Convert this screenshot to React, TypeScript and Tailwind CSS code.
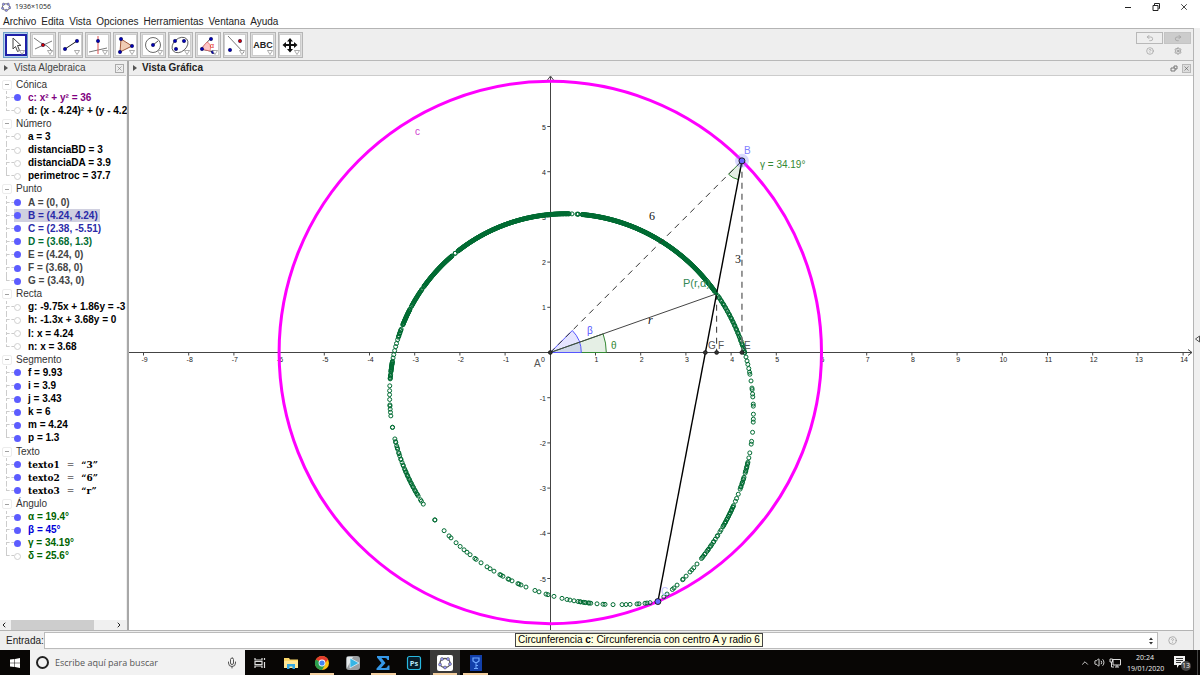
import type { ReactNode } from "react";
import { ChevronLeft, ChevronRight, ChevronUp, CircleHelp, Mic, Redo2, Settings, Undo2, Volume2, X } from "lucide-react";

type Row = {
    text: string;
    color?: string;
    group?: boolean;
    hidden?: boolean;
    selected?: boolean;
    last?: boolean;
    serif?: string;
};

const gray = "text-[#444444]";
const navy = "text-[#2a2aa8]";
const green = "text-[#006400]";

const rows: Row[] = [
    { text: "Cónica", group: true },
    { text: "c: x² + y² = 36", color: "text-[#800080]" },
    { text: "d: (x - 4.24)² + (y - 4.2", hidden: true, last: true },
    { text: "Número", group: true },
    { text: "a = 3", hidden: true },
    { text: "distanciaBD = 3", hidden: true },
    { text: "distanciaDA = 3.9", hidden: true },
    { text: "perimetroc = 37.7", hidden: true, last: true },
    { text: "Punto", group: true },
    { text: "A = (0, 0)", color: gray },
    { text: "B = (4.24, 4.24)", color: navy, selected: true },
    { text: "C = (2.38, -5.51)", color: navy },
    { text: "D = (3.68, 1.3)", color: "text-[#006b32]" },
    { text: "E = (4.24, 0)", color: gray },
    { text: "F = (3.68, 0)", color: gray },
    { text: "G = (3.43, 0)", color: gray, last: true },
    { text: "Recta", group: true },
    { text: "g: -9.75x + 1.86y = -3", hidden: true },
    { text: "h: -1.3x + 3.68y = 0", hidden: true },
    { text: "l: x = 4.24", hidden: true },
    { text: "n: x = 3.68", hidden: true, last: true },
    { text: "Segmento", group: true },
    { text: "f = 9.93" },
    { text: "i = 3.9" },
    { text: "j = 3.43" },
    { text: "k = 6" },
    { text: "m = 4.24" },
    { text: "p = 1.3", last: true },
    { text: "Texto", group: true },
    { text: "texto1", serif: "“3”" },
    { text: "texto2", serif: "“6”" },
    { text: "texto3", serif: "“r”", last: true },
    { text: "Ángulo", group: true },
    { text: "α = 19.4°", color: green },
    { text: "β = 45°", color: "text-[#0000d8]" },
    { text: "γ = 34.19°", color: green },
    { text: "δ = 25.6°", color: green, hidden: true, last: true },
];

const TreeRow = ({ row }: { row: Row }) => {
    if (row.group) {
        return (
            <li className="flex items-center gap-1 whitespace-nowrap pl-0.5 text-[#333333]">
                <span className="flex h-[10px] w-[10px] items-center justify-center rounded-[2px] border border-[#ececec]">
                    <span className="h-px w-1 bg-[#a0a0a0]" />
                </span>
                {row.text}
            </li>
        );
    }
    return (
        <li className="flex min-w-0 items-stretch whitespace-nowrap font-bold">
            <span className="flex w-[14px] shrink-0 pl-1.5">
                <span className={`${row.last ? "h-1/2" : "h-full"} border-l border-dashed border-[#cccccc]`} />
                <span className="h-1/2 w-full border-b border-dashed border-[#cccccc]" />
            </span>
            <span className={`${row.selected ? "bg-[#d0d0e0]" : ""} flex items-center pr-0.5`}>
                <span className={`${row.hidden ? "border border-[#d0d0d0] bg-white" : "bg-[#5c5cff]"} mr-[7px] h-[7px] w-[7px] shrink-0 rounded-full`} />
                {row.serif ? (
                    <span className="flex gap-[7px] font-['DejaVu_Serif',serif] text-[9px] text-black">
                        <span>{row.text}</span>
                        <span className="font-normal">=</span>
                        <span>{row.serif}</span>
                    </span>
                ) : (
                    <span className={row.color ?? "text-black"}>{row.text}</span>
                )}
            </span>
        </li>
    );
};

const Dot = ({ x, y, fill = "#0000b4" }: { x: number; y: number; fill?: string }) => (
    <circle cx={x} cy={y} r="1.7" fill={fill} stroke="#000040" strokeWidth="0.5" />
);

const tools: { name: string; icon: ReactNode }[] = [
    { name: "Elige y Mueve", icon: <path d="M7 3v11l2.500-2.500 2 5 2-1-2-5h3.500z" fill="#fff" stroke="#444" /> },
    { name: "Intersección", icon: <><path d="M1 3q6 5 13 8 4 3 5 6M2 14 19 6" fill="none" stroke="#555" strokeWidth="0.8" /><Dot x={10} y={10} fill="#d00000" /></> },
    { name: "Segmento", icon: <><path d="M4 14 16 6" stroke="#222" /><Dot x={4} y={14} /><Dot x={16} y={6} /></> },
    { name: "Perpendicular", icon: <><path d="M1 17 19 13" stroke="#555" strokeWidth="0.8" /><path d="M10 1v18" stroke="#e05050" /><Dot x={10} y={6} /></> },
    { name: "Polígono", icon: <><path d="M5 4 16 11 4 17z" fill="#f0cdb5" stroke="#a05a3c" /><Dot x={5} y={4} /><Dot x={16} y={11} /><Dot x={4} y={17} /></> },
    { name: "Circunferencia", icon: <><circle cx="10" cy="10" r="7.5" fill="none" stroke="#444" strokeWidth="0.8" /><path d="m10 10 5-4" stroke="#555" /><Dot x={10} y={10} /></> },
    { name: "Elipse", icon: <><ellipse cx="10" cy="10" rx="9" ry="6.5" transform="rotate(-42 10 10)" fill="none" stroke="#444" strokeWidth="0.8" /><Dot x={5} y={6} /><Dot x={14} y={6} /><Dot x={6} y={14} /></> },
    { name: "Ángulo", icon: <><path d="M13 3 3 14 16 17" fill="none" stroke="#555" /><path d="M9 7q5 2 3 9L3 14z" fill="#ffc5c5" stroke="#e05050" strokeWidth="0.6" /><text x="12" y="13" fontSize="7" fill="#e02020">α</text><Dot x={13} y={4} /><Dot x={4} y={14} /><Dot x={15} y={17} /></> },
    { name: "Simetría", icon: <><path d="m3 1 16 17" stroke="#555" strokeWidth="0.8" /><Dot x={15} y={6} fill="#d00000" /><Dot x={5} y={15} /></> },
    { name: "Texto", icon: <text x="10" y="13" fontSize="9" fontWeight="bold" textAnchor="middle" fill="#222">ABC</text> },
    { name: "Desplaza Vista Gráfica", icon: <path d="M10 3 13 6.500h-2V9h3V7l3.500 3L14 13v-2h-3v3h2l-3 3.500L7 14h2v-3H6v2l-3.500-3L6 7v2h3V6.500H7z" fill="#111" /> },
];

const GeoLogo = () => (
    <svg viewBox="0 0 16 16" className="h-full w-full" aria-hidden="true">
        <ellipse cx="8" cy="8" rx="6" ry="5.300" fill="none" stroke="#666" strokeWidth="1.400" />
        {[[4, 3.5], [11.5, 3.5], [14, 9], [8.5, 13.5], [2.5, 10]].map(([x, y]) => (
            <circle key={x} cx={x} cy={y} r="1.8" fill="#9999ff" stroke="#333" strokeWidth="0.6" />
        ))}
    </svg>
);

// Plane to screen
const UNIT = 45.2;
const OX = 550.3;
const OY = 352.5;
const px = (x: number) => OX + x * UNIT;
const py = (y: number) => OY - y * UNIT;

const C = { x: 2.38, y: -5.51 };

// Angle at C of a traced point, measured from the line CA. The trace is r = 12cos(phi) - 3
const phiOf = (sx: number, sy: number) => {
    const dx = (sx - OX) / UNIT - C.x;
    const dy = (OY - sy) / UNIT - C.y;
    const cross = -C.x * dy + C.y * dx;
    const dot = -C.x * dx - C.y * dy;
    const dist = Math.hypot(dx, dy);
    if (dist < 5) return Math.sign(cross) * Math.acos((dist + 3) / 12);
    return Math.atan2(cross, dot);
};

const tracePoint = (phi: number) => {
    const r = 12 * Math.cos(phi) - 3;
    const a = Math.atan2(-C.y, -C.x) + phi;
    return [px(C.x + r * Math.cos(a)), py(C.y + r * Math.sin(a))];
};

// x1, y1, x2, y2, number of points
const runs = [
    [582, 214, 715, 291, 300], [718, 296, 745, 353, 44], [458, 251, 569, 213, 220],
    [452, 256, 424, 287, 75], [422, 289, 411, 306, 24], [409, 308, 402, 324, 30],
    [400, 328, 397, 336, 9], [391, 360, 390, 371, 16], [390, 374, 390, 379, 6],
    [395, 439, 405, 469, 15], [405, 470, 418, 496, 20], [578, 602, 591, 603, 9],
    [703, 556, 714, 541, 11], [715, 539, 721, 530, 5], [723, 527, 733, 505, 20],
    [740, 489, 744, 477, 9], [745, 473, 748, 462, 9],
];

const singles = [
    [572, 214], [577, 214], [578, 214], [578, 214], [583, 214], [455, 253], [455, 253],
    [396, 338], [395, 342], [395, 346], [394, 350], [393, 354], [392, 357],
    [390, 386], [390, 391], [390, 395], [389, 399], [390, 405], [390, 406], [390, 409], [390, 412], [391, 416],
    [392, 427], [392, 427], [421, 500], [421, 501], [423, 504], [435, 520], [435, 520],
    [444, 531], [449, 536], [451, 538], [456, 543], [460, 547], [464, 550], [467, 552], [470, 555],
    [475, 558], [476, 560], [481, 563], [487, 567], [490, 569], [494, 571], [500, 574], [501, 575],
    [503, 576], [508, 579], [509, 579], [512, 581], [518, 583], [519, 584], [521, 585], [526, 587],
    [535, 590], [539, 592], [546, 594], [548, 595], [554, 596], [562, 598], [567, 599], [570, 600],
    [574, 601], [597, 603], [603, 604], [605, 604], [613, 604], [622, 604], [626, 604], [630, 604],
    [637, 604], [639, 604], [645, 603], [647, 603], [650, 602],
    [664, 597], [667, 594], [672, 589], [674, 588], [677, 585], [682, 579], [683, 579], [686, 576],
    [690, 572], [692, 570], [694, 568], [697, 564], [701, 558], [702, 557],
    [735, 501], [736, 498], [738, 494], [749, 458], [750, 453], [751, 444], [751, 441], [752, 432],
    [753, 422], [753, 419], [753, 414], [753, 406], [753, 404], [753, 397], [753, 393], [752, 390],
    [752, 388], [751, 381], [750, 374], [750, 371], [749, 368], [748, 364], [747, 361], [746, 357],
];

const trace = [
    ...singles.map(([x, y]) => tracePoint(phiOf(x, y))),
    ...runs.flatMap(([x1, y1, x2, y2, n]) => {
        const from = phiOf(x1, y1);
        const to = phiOf(x2, y2);
        return Array.from({ length: n }, (_, i) => {
            const t = Math.min(1, (i + 0.35 * Math.sin(i * 2.3)) / (n - 1));
            return tracePoint(from + (to - from) * t);
        });
    }),
];

const range = (from: number, to: number) => Array.from({ length: to - from + 1 }, (_, i) => from + i);

const GraphicsView = () => {
    const bx = px(4.24);
    const by = py(4.24);
    const dx = px(3.68);
    const dy = py(1.3);
    return (
        <svg className="h-full w-full" role="img" aria-label="Vista Gráfica" fontFamily="Liberation Sans, Arial, sans-serif">
            <g transform="translate(-129 -76)">
                {/* axes */}
                <g stroke="#444" strokeWidth="1" fill="none">
                    <path d={`M128 ${OY}H1192M1188 349.500l4 3-4 3M550.500 630V77M547.500 80l3-4 3 4`} />
                    {range(-9, 14).filter((n) => n !== 0).map((n) => <path key={n} d={`M${px(n)} ${OY}v3`} />)}
                    {range(-5, 5).filter((n) => n !== 0).map((n) => <path key={n} d={`M${OX} ${py(n)}h-3`} />)}
                </g>
                <g fontSize="7" fill="#222">
                    {range(-9, 14).filter((n) => n !== 0).map((n) => <text key={n} x={px(n) + 1} y="362" textAnchor="middle">{n}</text>)}
                    {range(-5, 5).filter((n) => n !== 0).map((n) => <text key={n} x="546" y={py(n) + 3} textAnchor="end">{n}</text>)}
                    <text x="541" y="362">0</text>
                </g>

                {/* angles */}
                <path d={`M${OX} ${OY}h56A56 56 0 0 0 ${OX + 52.8} ${OY - 18.6}z`} fill="#006400" fillOpacity="0.1" stroke="#338833" />
                <path d={`M${OX} ${OY}h31A31 31 0 0 0 ${OX + 22} ${OY - 22}z`} fill="#0000ff" fillOpacity="0.1" stroke="#5555ff" />
                <path d={`M${bx} ${by}l-13.400 13.400A19 19 0 0 0 ${bx - 3.6} ${by + 18.7}z`} fill="#006400" fillOpacity="0.1" stroke="#338833" />

                {/* circle and segments */}
                <circle cx={OX} cy={OY} r={6 * UNIT} fill="none" stroke="#ff00ff" strokeWidth="3" />
                <g stroke="#006b32" strokeWidth="1" fill="none">
                    {trace.map(([x, y], i) => <circle key={i} cx={x} cy={y} r="2" />)}
                </g>
                <path d={`M${OX} ${OY}L${bx} ${by}`} stroke="#333" strokeDasharray="6 5" />
                <path d={`M${bx} ${by}V${OY}`} stroke="#777" strokeWidth="1.500" strokeDasharray="6 5" />
                <path d={`M${dx} ${dy}V${OY}`} stroke="#333" strokeDasharray="6 5" />
                <path d={`M${OX} ${OY}L${dx} ${dy}`} stroke="#444" />
                <path d={`M${bx} ${by}L${px(C.x)} ${py(C.y)}`} stroke="#000" strokeWidth="1.400" />

                {/* points */}
                <circle cx={bx} cy={by} r="7" fill="#7d7dff" fillOpacity="0.3" />
                <g fill="#6666ff" stroke="#111" strokeWidth="0.900">
                    <circle cx={bx} cy={by} r="3" />
                    <circle cx={px(C.x)} cy={py(C.y)} r="3" />
                </g>
                <g fill="#333" stroke="#000" strokeWidth="0.500">
                    {[0, 3.43, 3.68, 4.24].map((x) => <circle key={x} cx={px(x)} cy={OY} r="2" />)}
                </g>
                <circle cx={dx} cy={dy} r="1.800" fill="#006b32" />

                <g fontSize="10" fill="#555">
                    <text x="534" y="367">A</text>
                    <text x="708" y="349">G</text>
                    <text x="718" y="349">F</text>
                    <text x="744" y="349">E</text>
                    <text x="744" y="154" fill="#8080ff">B</text>
                    <text x="661" y="595" fill="#c4c4ff">C</text>
                    <text x="415" y="135" fill="#d040d0">c</text>
                    <text x="587" y="334" fill="#5555ff">β</text>
                    <text x="611" y="349" fill="#338833">θ</text>
                    <text x="760" y="168" fill="#338833">γ = 34.19°</text>
                    <text x="683" y="287" fontSize="11" fill="#338855">P(r,α)</text>
                </g>
                <g fontSize="12" fill="#111" fontFamily="Liberation Serif, Times New Roman, serif">
                    <text x="649" y="220">6</text>
                    <text x="735" y="263">3</text>
                    <text x="648" y="324" fontStyle="italic">r</text>
                </g>
            </g>
        </svg>
    );
};

const taskbarApps: { name: string; open?: boolean; active?: boolean; icon: ReactNode }[] = [
    { name: "Vista de tareas", icon: <path d="M3 3v2h7V3M3 13v-2h7v2M3 6.500h7v3H3zM12.500 3v2M12.500 7v6" fill="none" stroke="#ddd" strokeWidth="1.200" /> },
    { name: "Explorador de archivos", icon: <><path d="M1 3h5l1 1.500h8V13H1z" fill="#fbd76a" /><path d="M1 6h14v7H1z" fill="#ffe694" /><path d="M4 14V9h8v5h-2.500v-2.500h-3V14z" fill="#35a7e0" /></> },
    { name: "Chrome", open: true, icon: <><circle cx="8" cy="8" r="7" fill="#fbc116" /><path d="M8 8 1.900 4.500A7 7 0 0 1 14.100 4.500z" fill="#e33b2e" /><path d="M8 8 1.900 4.500A7 7 0 0 0 8 15l3-5z" fill="#2a9d4e" /><path d="M8 4.500h6.100L11 8z" fill="#e33b2e" /><circle cx="8" cy="8" r="3.400" fill="#fff" /><circle cx="8" cy="8" r="2.600" fill="#4285f4" /></> },
    { name: "Reproductor", icon: <><rect x="1" y="1" width="14" height="14" rx="3" fill="#9a9fa3" /><path d="M2 2h6L2 13z" fill="#e5e8ea" /><path d="M5 3v10l9-5z" fill="#35b5e5" stroke="#e8f7ff" strokeWidth="0.700" /></> },
    { name: "Sumatoria", open: true, icon: <path d="M2 1h12v4h-1.500Q12 3 10 3H6.500l4 5-4.500 5h4q2.500 0 3-2.500h1.500V15H1.500v-1.500L6.500 8 2 2.500z" fill="#3598e8" /> },
    { name: "Photoshop", icon: <><rect x="1.500" y="1.500" width="13" height="13" rx="2" fill="#071c29" stroke="#28b8e0" strokeWidth="1.200" /><text x="8" y="11" fontSize="7.500" fontWeight="bold" textAnchor="middle" fill="#b5e8fa" fontFamily="Open Sans, sans-serif">Ps</text></> },
    { name: "GeoGebra", open: true, active: true, icon: <><rect width="16" height="16" rx="2" fill="#fff" /><ellipse cx="8" cy="8" rx="5" ry="4.500" fill="none" stroke="#555" strokeWidth="1.300" />{[[5, 4], [11, 4], [13, 9], [8, 12.5], [3, 9.5]].map(([x, y]) => <circle key={x} cx={x} cy={y} r="1.5" fill="#9999ff" stroke="#444" strokeWidth="0.5" />)}</> },
    { name: "Llaves", open: true, icon: <><path d="M2 0h12v16H2z" fill="#123faa" /><path d="M5 3h6v3L9 7.500H7L5 6z" fill="none" stroke="#70a8ff" strokeWidth="1.200" /><path d="M8 7.500v6M8 10.500h2M6 13.500h4" stroke="#70a8ff" /></> },
];

const menu = ["Archivo", "Edita", "Vista", "Opciones", "Herramientas", "Ventana", "Ayuda"];

const App = () => {
    return (
        <div className="flex h-screen flex-col overflow-hidden bg-white font-['Liberation_Sans',Arial,sans-serif] text-[10px] leading-3 text-[#222222]">
            <header className="h-7 shrink-0">
                <div className="flex h-[14px] items-center justify-between pl-px">
                    <div className="flex items-center gap-1 font-['Open_Sans',sans-serif] text-[7px]">
                        <span className="h-2.5 w-2.5"><GeoLogo /></span>
                        <h1>1936×1056</h1>
                    </div>
                    <div className="flex gap-[18px] pr-[11px]">
                        <button aria-label="Minimizar" className="flex w-2.5 items-center justify-center"><span className="h-px w-1.5 bg-[#222222]" /></button>
                        <button aria-label="Restaurar" className="w-2.5">
                            <svg viewBox="0 0 10 10" className="h-2.5 w-2.5"><path d="M2 3.500h5v5H2zM3.500 3V1.500H8.500v5H7.500" fill="none" stroke="#222" /></svg>
                        </button>
                        <button aria-label="Cerrar"><X className="h-2.5 w-2.5" /></button>
                    </div>
                </div>
                <nav className="flex h-4 items-center gap-[5px] pl-[3px]">
                    {menu.map((item) => (
                        <button key={item}>{item}</button>
                    ))}
                </nav>
            </header>

            <div className="flex min-h-0 flex-1 bg-[#f0f0f0]">
                <div className="flex min-w-0 flex-1 flex-col border-r border-t border-[#b4b4b4] bg-[#eeeeee]">
                    {/* toolbar */}
                    <div className="flex h-8 shrink-0 items-center justify-between border-b border-[#b8b8b8] pl-0.5 pr-[2px]">
                        <div className="grid w-[302px] shrink-0 grid-cols-11">
                            {tools.map(({ name, icon }, idx) => (
                                <button
                                    key={name}
                                    aria-label={name}
                                    className={`${idx === 0 ? "border-[#6f9fc8] bg-[#b8d4ee]" : "border-[#b5b5b5] bg-[#dddddd]"} relative mx-px flex h-[26px] items-center justify-center border`}
                                >
                                    <span className={`${idx === 0 ? "border-2 border-[#2020a8]" : "border border-[#cccccc]"} flex h-[22px] w-[22px] items-center justify-center bg-white`}>
                                        <svg viewBox="0 0 20 20" className="h-5 w-5 shrink-0">{icon}</svg>
                                    </span>
                                    <svg viewBox="0 0 6 5" className="absolute bottom-0.5 right-0.5 h-[5px] w-1.5"><path d="M.5.5h5L3 4.500z" fill="#fff" stroke="#888" strokeWidth="0.700" /></svg>
                                </button>
                            ))}
                        </div>
                        <div className="grid grid-cols-2 gap-px text-[#999999]">
                            <button aria-label="Deshacer" className="flex h-3 w-[27px] items-center justify-center border border-[#b8b8b8]"><Undo2 className="h-2 w-2" /></button>
                            <button aria-label="Rehacer" className="flex h-3 w-[27px] items-center justify-center border border-[#c4c4c4] bg-[#cccccc]"><Redo2 className="h-2 w-2" /></button>
                            <button aria-label="Ayuda" className="flex h-3 items-center justify-center"><CircleHelp className="h-2 w-2" /></button>
                            <button aria-label="Configuración" className="flex h-3 items-center justify-center"><Settings className="h-2 w-2" strokeWidth={3} /></button>
                        </div>
                    </div>

                    {/* panels */}
                    <div className="flex min-h-0 flex-1">
                        <aside className="flex w-[126px] shrink-0 flex-col">
                            <div className="flex h-[15px] shrink-0 items-center border-b border-[#cccccc] pl-1 pr-0.5">
                                <svg viewBox="0 0 4 6" className="mr-1.5 h-1.5 w-1"><path d="M0 0l4 3-4 3z" fill="#555" /></svg>
                                <h2 className="flex-1 text-[#444444]">Vista Algebraica</h2>
                                <button aria-label="Cerrar vista" className="border border-[#aaaaaa] text-[#777777]"><X className="h-[7px] w-[7px]" /></button>
                            </div>
                            <div className="flex min-h-0 flex-1 flex-col justify-between bg-white pt-0.5">
                                <ul className="grid h-[485px] auto-rows-fr">
                                    {rows.map((row) => (
                                        <TreeRow key={row.text} row={row} />
                                    ))}
                                </ul>
                                <div className="flex h-2.5 shrink-0 items-center bg-[#f0f0f0]">
                                    <button aria-label="Izquierda" className="w-[11px]"><ChevronLeft className="h-2 w-2" strokeWidth={3} /></button>
                                    <div className="flex h-full flex-1"><span className="w-4/5 bg-[#cdcdcd]" /></div>
                                    <button aria-label="Derecha" className="w-[11px]"><ChevronRight className="h-2 w-2" strokeWidth={3} /></button>
                                </div>
                            </div>
                        </aside>
                        <main className="ml-px flex min-w-0 flex-1 flex-col border-l-2 border-[#a8a8a8]">
                            <div className="flex h-[15px] shrink-0 items-center border-b border-[#cccccc] pl-1 pr-0.5">
                                <svg viewBox="0 0 4 6" className="mr-[5px] h-1.5 w-1"><path d="M0 0l4 3-4 3z" fill="#555" /></svg>
                                <h2 className="flex-1 font-bold">Vista Gráfica</h2>
                                <button aria-label="Separar ventana" className="mr-1"><svg viewBox="0 0 8 7" className="h-[7px] w-2"><path d="M1 3h4v3H1zM4 3V1h3v3H5" fill="none" stroke="#777" /></svg></button>
                                <button aria-label="Cerrar vista gráfica" className="border border-[#b8b8b8] bg-[#dddddd] text-[#555555]"><X className="h-[7px] w-[7px]" /></button>
                            </div>
                            <div className="min-h-0 flex-1 overflow-hidden bg-white"><GraphicsView /></div>
                        </main>
                    </div>

                    {/* input bar */}
                    <div className="relative flex h-5 shrink-0 items-center border-t border-[#b4b4b4] pl-1.5">
                        <label htmlFor="entrada" className="w-[38px]">Entrada:</label>
                        <div className="flex h-[17px] flex-1 items-center border border-[#bbbbbb] bg-white pr-[3px]">
                            <input id="entrada" className="h-full min-w-0 flex-1 px-1 outline-none" />
                            <button aria-label="Historial"><svg viewBox="0 0 6 8" className="h-2 w-1.5"><path d="M3 0.500l2 2.500h-4zM3 7.500l2-2.500h-4z" fill="#333" /></svg></button>
                        </div>
                        <button aria-label="Ayuda de entrada" className="ml-2.5 mr-4 text-[#999999]"><CircleHelp className="h-[9px] w-[9px]" /></button>
                        <div className="absolute left-[515px] top-0.5 whitespace-nowrap border border-[#444444] bg-[#ffffe1] px-0.5 text-black">
                            Circunferencia <b>c</b>: Circunferencia con centro A y radio 6
                        </div>
                    </div>
                </div>
                <button aria-label="Mostrar panel" className="flex w-1.5 items-center justify-center">
                    <svg viewBox="0 0 5 8" className="h-2 w-[5px]"><path d="M4.500 1v6L.5 4z" fill="none" stroke="#555" /></svg>
                </button>
            </div>

            {/* taskbar */}
            <footer className="flex h-[25px] shrink-0 items-stretch bg-[#080605] font-['Open_Sans',sans-serif] text-white">
                <button aria-label="Inicio" className="flex w-[30px] items-center justify-center">
                    <svg viewBox="0 0 12 12" className="h-3 w-3"><path d="M1 2.500 5.500 2v3.700H1zM6 1.900 11 1v4.700H6zM1 6.300h4.500V10L1 9.500zM6 6.300h5V11l-5-.9z" fill="#fff" /></svg>
                </button>
                <label className="flex w-[215px] items-center bg-[#f2f2f2] pl-1.5 pr-[7px] text-[#555555]">
                    <span className="mr-1.5 h-[13px] w-[13px] rounded-full border-2 border-[#222222]" />
                    <input aria-label="Buscar" placeholder="Escribe aquí para buscar" className="min-w-0 flex-1 text-[9px] outline-none placeholder:text-[#555555]" />
                    <Mic className="h-3 w-3" />
                </label>
                <nav className="flex w-[246px]">
                    {taskbarApps.map(({ name, open, active, icon }) => (
                        <button
                            key={name}
                            aria-label={name}
                            className={`${active ? "bg-[#3a3938]" : ""} relative flex flex-1 items-center justify-center`}
                        >
                            <svg viewBox="0 0 16 16" className="h-4 w-4">{icon}</svg>
                            {open && <span className="absolute inset-x-[3px] bottom-0 h-0.5 bg-[#f3cfa0]" />}
                        </button>
                    ))}
                </nav>
                <div className="ml-auto flex items-center text-[#eeeeee]">
                    <button aria-label="Iconos ocultos" className="mr-1"><ChevronUp className="h-2.5 w-2.5" /></button>
                    <button aria-label="Volumen" className="mr-1"><Volume2 className="h-[11px] w-[11px]" /></button>
                    <button aria-label="Red" className="mr-1.5">
                        <svg viewBox="0 0 12 10" className="h-2.5 w-3"><path d="M4 1.500h7.500V7H4zM6 9h4M8 7v2M1 1h2.500v3H1zM2.500 4v5H5" fill="none" stroke="#ddd" /></svg>
                    </button>
                    <div className="w-[36px] text-center text-[7px] leading-[11px]">
                        <p>20:24</p>
                        <p>19/01/2020</p>
                    </div>
                    <button aria-label="Notificaciones" className="relative ml-2.5 mr-2 h-4 w-4">
                        <svg viewBox="0 0 16 16" className="h-4 w-4"><path d="M1 1h11v9H6l-2 3v-3H1z" fill="#f2f2f2" /><path d="M3 3.500h7M3 5.500h7M3 7.500h5" stroke="#222" strokeWidth="0.900" /></svg>
                        <span className="absolute -right-0.5 bottom-0 flex h-2.5 w-2.5 items-center justify-center rounded-full bg-[#444444] text-[7px] leading-none">13</span>
                    </button>
                    <span className="mr-0.5 h-full w-px bg-[#444444]" />
                </div>
            </footer>
        </div>
    );
};

export default App;
